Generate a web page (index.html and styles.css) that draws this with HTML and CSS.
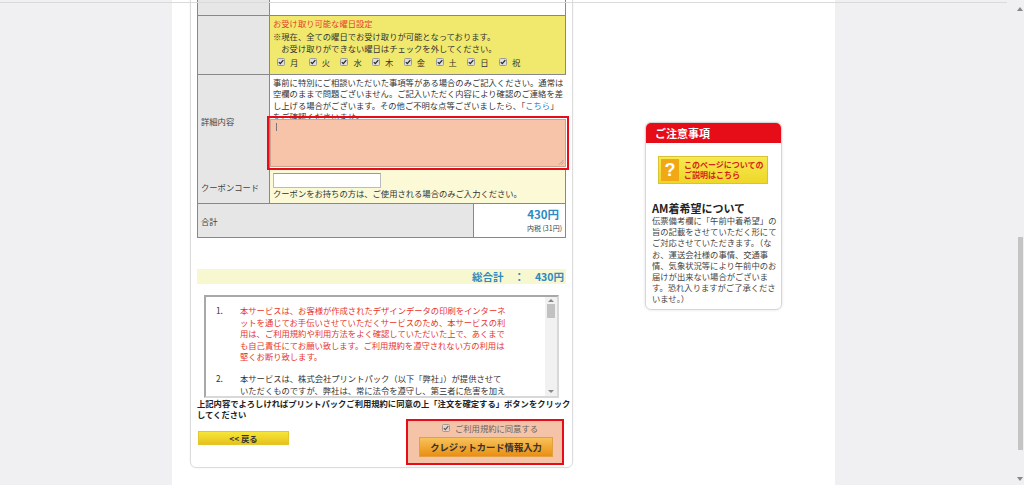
FILE: index.html
```html
<!DOCTYPE html>
<html lang="ja">
<head>
<meta charset="utf-8">
<title>ご注文内容の確認</title>
<link rel="stylesheet" href="styles.css">
</head>
<body>
<div class="viewport">
  <div class="page">
    <div class="main">
      <div class="card">
        <div class="tbl">
          <div class="row r-top"><div class="th"></div><div class="td"></div></div>
          <div class="row r-days">
            <div class="th"></div>
            <div class="td yellow">
              <p class="days-title">お受け取り可能な曜日設定</p>
              <p class="days-note">※現在、全ての曜日でお受け取りが可能となっております。<br>　お受け取りができない曜日はチェックを外してください。</p>
              <div class="days">
                <span class="day"><svg class="cb" viewBox="0 0 8 8" width="8" height="8"><rect x=".5" y=".5" width="7" height="7" rx="1" fill="#dedede" stroke="#9a9a9a"/><path d="M1.8 4.1 3.3 5.6 6.3 2.1" fill="none" stroke="#222" stroke-width="1.2"/></svg>月</span>
                <span class="day"><svg class="cb" viewBox="0 0 8 8" width="8" height="8"><rect x=".5" y=".5" width="7" height="7" rx="1" fill="#dedede" stroke="#9a9a9a"/><path d="M1.8 4.1 3.3 5.6 6.3 2.1" fill="none" stroke="#222" stroke-width="1.2"/></svg>火</span>
                <span class="day"><svg class="cb" viewBox="0 0 8 8" width="8" height="8"><rect x=".5" y=".5" width="7" height="7" rx="1" fill="#dedede" stroke="#9a9a9a"/><path d="M1.8 4.1 3.3 5.6 6.3 2.1" fill="none" stroke="#222" stroke-width="1.2"/></svg>水</span>
                <span class="day"><svg class="cb" viewBox="0 0 8 8" width="8" height="8"><rect x=".5" y=".5" width="7" height="7" rx="1" fill="#dedede" stroke="#9a9a9a"/><path d="M1.8 4.1 3.3 5.6 6.3 2.1" fill="none" stroke="#222" stroke-width="1.2"/></svg>木</span>
                <span class="day"><svg class="cb" viewBox="0 0 8 8" width="8" height="8"><rect x=".5" y=".5" width="7" height="7" rx="1" fill="#dedede" stroke="#9a9a9a"/><path d="M1.8 4.1 3.3 5.6 6.3 2.1" fill="none" stroke="#222" stroke-width="1.2"/></svg>金</span>
                <span class="day"><svg class="cb" viewBox="0 0 8 8" width="8" height="8"><rect x=".5" y=".5" width="7" height="7" rx="1" fill="#dedede" stroke="#9a9a9a"/><path d="M1.8 4.1 3.3 5.6 6.3 2.1" fill="none" stroke="#222" stroke-width="1.2"/></svg>土</span>
                <span class="day"><svg class="cb" viewBox="0 0 8 8" width="8" height="8"><rect x=".5" y=".5" width="7" height="7" rx="1" fill="#dedede" stroke="#9a9a9a"/><path d="M1.8 4.1 3.3 5.6 6.3 2.1" fill="none" stroke="#222" stroke-width="1.2"/></svg>日</span>
                <span class="day"><svg class="cb" viewBox="0 0 8 8" width="8" height="8"><rect x=".5" y=".5" width="7" height="7" rx="1" fill="#dedede" stroke="#9a9a9a"/><path d="M1.8 4.1 3.3 5.6 6.3 2.1" fill="none" stroke="#222" stroke-width="1.2"/></svg>祝</span>
              </div>
            </div>
          </div>
          <div class="row r-detail">
            <div class="th th-detail">詳細内容</div>
            <div class="td">
              <p class="detail-text">事前に特別にご相談いただいた事項等がある場合のみご記入ください。通常は<br>空欄のままで問題ございません。ご記入いただく内容により確認のご連絡を差<br>し上げる場合がございます。その他ご不明な点等ございましたら、「<span class="link">こちら</span>」<br>をご確認くださいませ。</p>
              <div class="hl-area">
                <div class="textarea"><span class="caret"></span><svg class="grip" viewBox="0 0 6 6" width="6" height="6"><path d="M5.5 1 1 5.5M5.5 3.5 3.5 5.5" stroke="#999" stroke-width="0.8"/></svg></div>
              </div>
            </div>
          </div>
          <div class="row r-coupon">
            <div class="th">クーポンコード</div>
            <div class="td pale">
              <div class="input"></div>
              <p class="coupon-help">クーポンをお持ちの方は、ご使用される場合のみご入力ください。</p>
            </div>
          </div>
          <div class="row r-total">
            <div class="th">合計</div>
            <div class="td total-cell">
              <div class="price">430円</div>
              <div class="tax">内税 (31円)</div>
            </div>
          </div>
        </div>

        <div class="grand">総合計　：　430円</div>

        <div class="terms">
          <div class="terms-list">
            <div class="term red">
              <span class="n">1.</span>
              <span class="t">本サービスは、お客様が作成されたデザインデータの印刷をインターネ<br>ットを通じてお手伝いさせていただくサービスのため、本サービスの利<br>用は、ご利用規約や利用方法をよく確認していただいた上で、あくまで<br>も自己責任にてお願い致します。ご利用規約を遵守されない方の利用は<br>堅くお断り致します。</span>
            </div>
            <div class="term">
              <span class="n">2.</span>
              <span class="t">本サービスは、株式会社プリントパック（以下「弊社」）が提供させて<br>いただくものですが、弊社は、常に法令を遵守し、第三者に危害を加え</span>
            </div>
          </div>
          <div class="tscroll">
            <span class="arr up"></span>
            <span class="thumb"></span>
            <span class="arr down"></span>
          </div>
        </div>

        <p class="confirm">上記内容でよろしければプリントパックご利用規約に同意の上「注文を確定する」ボタンをクリック<br>してください</p>

        <div class="actions">
          <a class="back">&lt;&lt; 戻る</a>
          <div class="hl-submit">
            <label class="agree"><svg class="cb" viewBox="0 0 8 8" width="8" height="8"><rect x=".5" y=".5" width="7" height="7" rx="1" fill="#e4d4cc" stroke="#a89890"/><path d="M1.8 4.1 3.3 5.6 6.3 2.1" fill="none" stroke="#555" stroke-width="1.1"/></svg>ご利用規約に同意する</label>
            <a class="credit">クレジットカード情報入力</a>
          </div>
        </div>
      </div>
    </div>

    <aside class="side">
      <div class="side-head">ご注意事項</div>
      <a class="help"><span class="q">?</span><span class="help-text">このページについての<br>ご説明はこちら</span></a>
      <h3 class="side-title">AM着希望について</h3>
      <p class="side-text">伝票備考欄に「午前中着希望」の<br>旨の記載をさせていただく形にて<br>ご対応させていただきます。（な<br>お、運送会社様の事情、交通事<br>情、気象状況等により午前中のお<br>届けが出来ない場合がございま<br>す。恐れ入りますがご了承くださ<br>いませ。）</p>
    </aside>
  </div>
</div>
<div class="topline"></div>
<div class="vscroll"><span class="varr vup"></span><span class="vthumb"></span><span class="varr vdown"></span></div>
</body>
</html>
```

FILE: styles.css
```css
* { box-sizing: border-box; margin: 0; padding: 0; }
html, body { height: 485px; overflow: hidden; }
body {
  background: #f0f0f2;
  font-family: "Noto Sans CJK JP", "Noto Sans", sans-serif;
  font-size: 8.3px;
  color: #333;
  position: relative;
}
.viewport { width: 1007px; height: 485px; }
.page {
  width: 663px;
  height: 485px;
  margin: 0 auto;
  background: #fff;
  display: flex;
  padding-left: 18px;
}
.main { width: 383px; flex: none; }
.card {
  width: 383px;
  margin-top: -30px;
  border: 1px solid #dcdcdc;
  border-radius: 6px;
  padding: 10px 6px 2px;
  box-shadow: 0 0 2px rgba(0,0,0,0.08);
}
.tbl { border: 1px solid #888; border-bottom: none; }
.row {
  display: grid;
  grid-template-columns: 72px 1fr;
  border-bottom: 1px solid #888;
}
.th {
  background: #e6e6e6;
  border-right: 1px solid #888;
  padding-left: 3px;
  display: flex;
  align-items: center;
  color: #444;
}
.th-detail { padding-bottom: 4px; }
.td { padding: 0 3px; background: #fff; }
.r-top { height: 34px; }
.r-days { height: 59px; }
.r-detail { height: 95px; }
.r-coupon { height: 34px; }
.r-total { height: 34px; grid-template-columns: 276px 1fr; }

.yellow { background: #f0e96e; padding-top: 1px; }
.days-title { color: #e8412c; line-height: 12px; margin-bottom: 1px; }
.days-note { line-height: 12px; white-space: nowrap; }
.days { display: flex; align-items: center; height: 13px; padding-left: 4px; margin-top: 1px; }
.day { display: inline-flex; align-items: center; gap: 5px; margin-right: 10.4px; }
.cb { display: block; flex: none; }

.r-detail .td { padding-top: 2px; }
.detail-text { line-height: 11.3px; white-space: nowrap; }
.link { color: #3a78c8; }
.hl-area {
  position: relative;
  z-index: 2;
  margin: -6px -6px 0;
  height: 54px;
  border: 2px solid #e60c18;
  padding: 1px;
}
.textarea {
  position: relative;
  height: 100%;
  background: #f7c4a9;
  border: 1px solid #c9a592;
}
.caret { position: absolute; left: 5px; top: 3px; width: 1px; height: 8px; background: #777; }
.grip { position: absolute; right: 1px; bottom: 1px; }

.pale { background: #fbf9d6; padding-top: 3px; }
.input {
  width: 108px;
  height: 15px;
  background: #fff;
  border: 1px solid #bbb;
  border-top-color: #999;
}
.coupon-help { line-height: 11px; white-space: nowrap; }

.total-cell { text-align: right; padding: 2px 0 0; }
.price { font-size: 11.5px; font-weight: bold; color: #2d8bc4; line-height: 16px; padding-right: 6px; }
.tax { font-size: 7px; color: #444; line-height: 12px; padding-right: 3px; }

.grand {
  margin-top: 31px;
  height: 15px;
  line-height: 15px;
  background: #f7f7d0;
  text-align: right;
  padding-right: 2px;
  font-size: 10.5px;
  font-weight: bold;
  color: #2d8bc4;
}

.terms {
  position: relative;
  margin: 11px 7px 0;
  width: 355px;
  height: 103px;
  border: 2px solid;
  border-color: #a8a8a8 #d8d8d8 #d8d8d8 #a8a8a8;
  overflow: hidden;
  background: #fff;
}
.terms-list { padding: 8px 0 0 10px; }
.term { display: flex; margin-bottom: 10px; line-height: 11.6px; white-space: nowrap; }
.term .n { width: 24px; flex: none; color: #333; }
.term.red .t { color: #e8332a; }
.tscroll {
  position: absolute;
  top: 0;
  right: 0;
  width: 12px;
  height: 100%;
  background: #f1f1f1;
}
.tscroll .thumb { position: absolute; left: 2px; top: 7px; width: 8px; height: 14px; background: #c1c1c1; }
.arr { position: absolute; left: 3px; width: 0; height: 0; border-left: 3px solid transparent; border-right: 3px solid transparent; }
.arr.up { top: 2px; border-bottom: 3px solid #888; }
.arr.down { bottom: 3px; border-top: 3px solid #888; }

.confirm { font-weight: bold; line-height: 11px; color: #222; white-space: nowrap; }

.actions { display: flex; justify-content: space-between; align-items: flex-start; margin-top: -1px; }
.back {
  display: block;
  margin: 12px 0 0 1px;
  width: 91px;
  height: 14px;
  line-height: 13px;
  text-align: center;
  font-weight: bold;
  color: #333;
  background: linear-gradient(#f6e63a, #e6c21c);
  border: 1px solid #e2c62a;
}
.hl-submit {
  width: 158px;
  height: 46px;
  margin-right: 2px;
  border: 2px solid #e60c18;
  background: #f5c3a8;
  display: flex;
  flex-direction: column;
  align-items: center;
}
.agree { display: flex; align-items: center; gap: 5px; line-height: 12px; color: #666; margin-top: 1px; margin-left: 10px; }
.credit {
  display: block;
  margin-top: 3px;
  margin-left: 2px;
  width: 134px;
  height: 20px;
  line-height: 19px;
  text-align: center;
  font-size: 9.3px;
  font-weight: bold;
  color: #333;
  background: linear-gradient(#f8c25a, #e98f12);
  border: 1px solid #e2a040;
}

.side {
  width: 137px;
  flex: none;
  margin-left: 72px;
  margin-top: 122px;
  height: 188px;
  border: 1px solid #d6d6d6;
  border-radius: 6px;
  box-shadow: 0 0 3px rgba(0,0,0,0.12);
  overflow: hidden;
}
.side-head {
  height: 20px;
  line-height: 20px;
  background: #e60c18;
  color: #fff;
  font-size: 11px;
  font-weight: bold;
  padding-left: 9px;
}
.help {
  display: flex;
  align-items: center;
  margin: 13px 0 0 12px;
  width: 110px;
  height: 28px;
  background: linear-gradient(#f6ea50, #eed728);
  border: 1px solid #d9c236;
  padding-left: 2px;
}
.q {
  width: 18px;
  height: 22px;
  background: #f0a914;
  color: #fff;
  font-family: "Liberation Sans", sans-serif;
  font-weight: bold;
  font-size: 18px;
  line-height: 22px;
  text-align: center;
  flex: none;
}
.help-text { color: #d5251a; font-weight: bold; font-size: 8px; line-height: 10px; margin-left: 5px; white-space: nowrap; }
.side-title { font-size: 11px; font-weight: bold; color: #222; line-height: 14px; margin: 17px 0 0 6px; }
.side-text { line-height: 11.2px; margin: 0 0 0 6px; white-space: nowrap; color: #444; }

.topline { position: absolute; top: 2px; left: 0; width: 1024px; height: 1px; background: #dadada; }
.vscroll { position: absolute; top: 0; right: 0; width: 17px; height: 485px; background: #f0f0f2; }
.vthumb { position: absolute; left: 11px; top: 237px; width: 5px; height: 213px; background: #c4c4c4; }
.varr { position: absolute; left: 10px; width: 0; height: 0; border-left: 3px solid transparent; border-right: 3px solid transparent; }
.vup { top: 7px; border-bottom: 4px solid #888; }
.vdown { bottom: 4px; border-top: 4px solid #888; }
```
